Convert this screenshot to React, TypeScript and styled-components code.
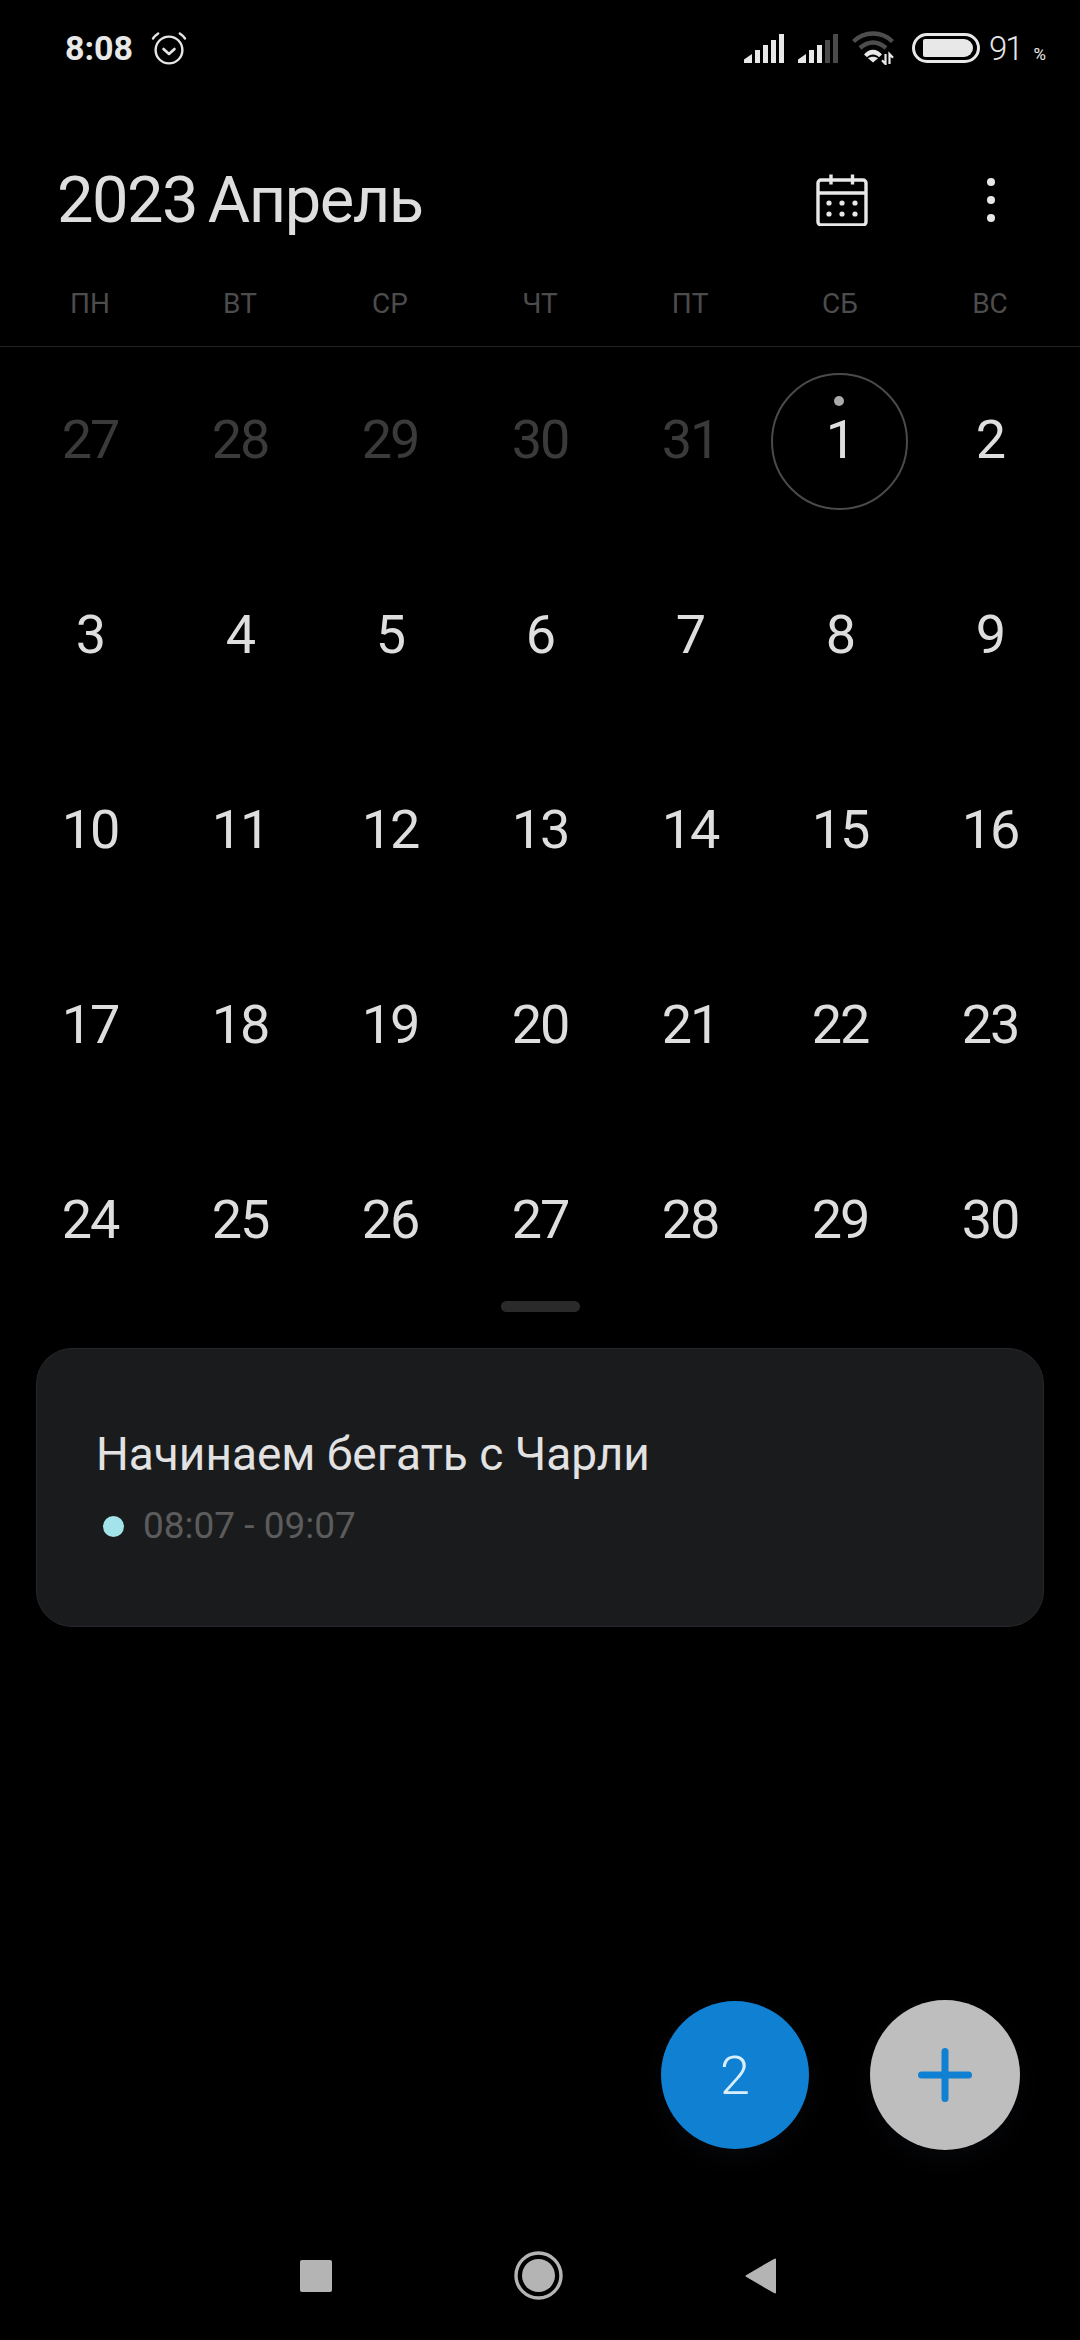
import { FC } from 'react'
import styled, { createGlobalStyle } from 'styled-components'

const GlobalStyle = createGlobalStyle`
   html, body {
      margin: 0;
      padding: 0;
      background: #000;
   }
   * {
      box-sizing: border-box;
   }
`

const WEEKDAYS = ['ПН', 'ВТ', 'СР', 'ЧТ', 'ПТ', 'СБ', 'ВС']
const PREV_DAYS = [27, 28, 29, 30, 31]
const DAYS = Array.from({ length: 30 }, (_, i) => i + 1)

const AlarmIcon: FC = () => (
   <svg width="36" height="36" viewBox="0 0 36 36" fill="none" stroke="#e6e6e6" strokeWidth="2.4" strokeLinecap="round" strokeLinejoin="round">
      <circle cx="18" cy="20" r="13.4" />
      <path d="M12.5 19l5.5 5 5.5-5" strokeWidth="2.6" />
      <path d="M2 8.5C3.4 6.4 5 4.8 7.2 3.4M34 8.5c-1.4-2.1-3-3.7-5.2-5.1" />
   </svg>
)

const SignalIcon: FC<{ dim?: boolean }> = ({ dim }) => (
   <svg width="40" height="29" viewBox="0 0 40 29">
      <path d="M0 29v-3.5L8 20v9z" fill="#e8e8e8" />
      <rect x="11" y="16" width="5" height="13" fill="#e8e8e8" />
      <rect x="19" y="11" width="5" height="18" fill="#e8e8e8" />
      <rect x="27" y="6" width="5" height="23" fill={dim ? '#4a4a4a' : '#e8e8e8'} />
      <rect x="35" y="0" width="5" height="29" fill={dim ? '#4a4a4a' : '#e8e8e8'} />
   </svg>
)

const WifiIcon: FC = () => (
   <svg width="44" height="34" viewBox="0 0 44 34" fill="none">
      <path d="M1.500 10.500C7 5 13.500 2.500 21 2.500s14 2.500 19.500 8" stroke="#4d4d4d" strokeWidth="4.400" />
      <path d="M8 17C12 13.500 16.300 11.500 21 11.500s9 2 13 5.500" stroke="#4d4d4d" strokeWidth="4.400" />
      <path d="M12 23.500C14.500 20.500 17.500 18.800 21 18.800s6.500 1.700 9 4.700l-3 2.700c-1.700-1.800-3.700-2.700-6-2.700s-4.300.9-6 2.700z" fill="#e8e8e8" />
      <path d="M21 31.500l-5-4.300c1.300-1 3-1.500 5-1.500s3.700.5 5 1.500z" fill="#e8e8e8" />
      <path d="M33.500 23v10l-3.500-3.800M37.500 33V23l3.500 3.800" stroke="#e8e8e8" strokeWidth="2.200" />
   </svg>
)

const CalendarIcon: FC = () => (
   <svg width="52" height="52" viewBox="0 0 52 52" fill="none" stroke="#e8e8e8" strokeWidth="3.4" strokeLinejoin="round">
      <rect x="2" y="6" width="48" height="45" rx="3" />
      <path d="M2 19h48M15 0.500v10M36.500 0.500v10" />
      <g fill="#e8e8e8" stroke="none">
         <circle cx="13" cy="29" r="2.6" />
         <circle cx="26" cy="29" r="2.6" />
         <circle cx="39" cy="29" r="2.6" />
         <circle cx="13" cy="40" r="2.6" />
         <circle cx="26" cy="40" r="2.6" />
         <circle cx="39" cy="40" r="2.6" />
      </g>
   </svg>
)

const App: FC = () => (
   <Page>
      <GlobalStyle />
      <StatusBar>
         <ClockGroup>
            <Clock>8:08</Clock>
            <AlarmIcon />
         </ClockGroup>
         <StatusGroup>
            <SignalIcon />
            <SignalIcon dim />
            <WifiIcon />
            <Battery>
               <BatteryFill />
            </Battery>
            <BatteryLevel>91</BatteryLevel>
            <BatteryPercent>%</BatteryPercent>
         </StatusGroup>
      </StatusBar>

      <Header>
         <Title>2023 Апрель</Title>
         <HeaderActions>
            <CalendarIcon />
            <MoreButton>
               <MoreDot />
               <MoreDot />
               <MoreDot />
            </MoreButton>
         </HeaderActions>
      </Header>

      <Weekdays>
         {WEEKDAYS.map(day => (
            <Weekday key={day}>{day}</Weekday>
         ))}
      </Weekdays>

      <Month>
         {PREV_DAYS.map(day => (
            <Day key={`prev-${day}`} muted>
               {day}
            </Day>
         ))}
         {DAYS.map(day => (
            <Day key={day}>
               {day}
               {day === 1 && (
                  <TodayRing>
                     <EventDot />
                  </TodayRing>
               )}
            </Day>
         ))}
      </Month>

      <Handle />

      <EventCard>
         <EventTitle>Начинаем бегать с Чарли</EventTitle>
         <EventTime>
            <EventMarker />
            08:07 - 09:07
         </EventTime>
      </EventCard>

      <Actions>
         <TodayButton>2</TodayButton>
         <AddButton>
            <svg width="54" height="54" viewBox="0 0 54 54" stroke="#0f80d2" strokeWidth="7" strokeLinecap="round">
               <path d="M27 3.5v47M3.5 27h47" />
            </svg>
         </AddButton>
      </Actions>

      <NavBar>
         <NavSquare />
         <svg width="49" height="49" viewBox="0 0 49 49" fill="#b4b4b4">
            <circle cx="24.5" cy="24.5" r="22.5" fill="none" stroke="#b4b4b4" strokeWidth="3.4" />
            <circle cx="24.5" cy="24.5" r="16.5" />
         </svg>
         <svg width="31" height="36" viewBox="0 0 31 36" fill="#b4b4b4" stroke="#b4b4b4" strokeWidth="2" strokeLinejoin="round">
            <path d="M1.5 18L30 1.500v33z" />
         </svg>
      </NavBar>
   </Page>
)

const Page = styled.div`
   width: 1080px;
   height: 2340px;
   background: #000;
   color: #e6e6e6;
   font-family: Roboto, 'Noto Sans', sans-serif;
   display: flex;
   flex-direction: column;
   overflow: hidden;
`

const StatusBar = styled.div`
   height: 96px;
   padding: 0 34px 0 65px;
   display: flex;
   align-items: center;
   justify-content: space-between;
`

const StatusGroup = styled.div`
   display: flex;
   align-items: center;
   gap: 14px;
`

const ClockGroup = styled(StatusGroup)`
   gap: 18px;
`

const Clock = styled.span`
   font-size: 34px;
   font-weight: 700;
   color: #e8e8e8;
`

const Battery = styled.div`
   width: 68px;
   height: 30px;
   border: 3px solid #e8e8e8;
   border-radius: 15px;
   padding: 3px 4px 3px 8px;
   margin-left: 2px;
`

const BatteryFill = styled.div`
   width: 100%;
   height: 100%;
   background: #e8e8e8;
   border-radius: 2px 9px 9px 2px;
`

const BatteryLevel = styled.span`
   font-size: 33px;
   font-weight: 300;
   letter-spacing: -2px;
   margin-left: -5px;
`

const BatteryPercent = styled.span`
   font-size: 17px;
   font-weight: 400;
   margin: 12px 0 0 -2px;
`

const Header = styled.div`
   height: 164px;
   padding: 54px 0 10px 57px;
   display: flex;
   align-items: center;
   justify-content: space-between;
`

const Title = styled.h1`
   margin: 0;
   font-size: 65px;
   font-weight: 400;
   letter-spacing: -1.5px;
   word-spacing: -4px;
   color: #dedede;
`

const HeaderActions = styled.div`
   display: flex;
   align-items: center;
   gap: 119px;
   padding-right: 85px;
`

const MoreButton = styled.div`
   display: flex;
   flex-direction: column;
   gap: 10px;
`

const MoreDot = styled.span`
   width: 8px;
   height: 8px;
   border-radius: 50%;
   background: #e8e8e8;
`

const Weekdays = styled.div`
   height: 87px;
   padding: 0 15px;
   display: grid;
   grid-template-columns: repeat(7, 150px);
   align-items: center;
   border-bottom: 1px solid #222;
`

const Weekday = styled.span`
   font-size: 28px;
   color: #4c4c4c;
   text-align: center;
`

const Month = styled.div`
   margin-top: 32px;
   padding: 0 15px;
   display: grid;
   grid-template-columns: repeat(7, 150px);
   grid-auto-rows: 120px;
   row-gap: 75px;
`

const Day = styled.div<{ muted?: boolean }>`
   position: relative;
   display: flex;
   align-items: center;
   justify-content: center;
   font-size: 54px;
   font-weight: 400;
   letter-spacing: -2px;
   color: ${p => (p.muted ? '#3a3a3a' : '#dedede')};
`

const TodayRing = styled.div`
   position: absolute;
   top: -6px;
   left: 6px;
   width: 137px;
   height: 137px;
   border: 2px solid #4a4a4a;
   border-radius: 50%;
`

const EventDot = styled.span`
   position: absolute;
   top: 21px;
   left: 61px;
   width: 10px;
   height: 10px;
   border-radius: 50%;
   background: #aaa;
`

const Handle = styled.div`
   width: 79px;
   height: 11px;
   margin: 22px auto 0;
   border-radius: 6px;
   background: #2a2a2a;
`

const EventCard = styled.div`
   margin: 36px 36px 0;
   height: 279px;
   padding: 79px 59px 0;
   background: #1a1b1d;
   border: 1px solid #25272a;
   border-radius: 36px;
`

const EventTitle = styled.div`
   font-size: 46px;
   line-height: 52px;
   color: #e2e2e2;
`

const EventTime = styled.div`
   margin-top: 24px;
   display: flex;
   align-items: center;
   gap: 19px;
   font-size: 37px;
   line-height: 44px;
   color: #5c5c5c;
`

const EventMarker = styled.span`
   width: 21px;
   height: 21px;
   margin-left: 7px;
   border-radius: 50%;
   background: #a2e4ea;
`

const Actions = styled.div`
   margin-top: auto;
   padding-right: 60px;
   display: flex;
   align-items: center;
   justify-content: flex-end;
   gap: 61px;
`

const RoundButton = styled.div`
   display: flex;
   align-items: center;
   justify-content: center;
   border-radius: 50%;
   box-shadow: 0 10px 30px rgba(40, 50, 70, 0.14);
`

const TodayButton = styled(RoundButton)`
   width: 148px;
   height: 148px;
   background: #0f80d2;
   color: #d8eefc;
   font-size: 54px;
   font-weight: 300;
`

const AddButton = styled(RoundButton)`
   width: 150px;
   height: 150px;
   background: #bebebe;
`

const NavBar = styled.div`
   margin-top: 101px;
   padding: 0 4px 40px 0;
   display: flex;
   align-items: center;
   justify-content: center;
   gap: 182px;
`

const NavSquare = styled.div`
   width: 32px;
   height: 32px;
   border-radius: 2px;
   background: #b4b4b4;
`

export default App
